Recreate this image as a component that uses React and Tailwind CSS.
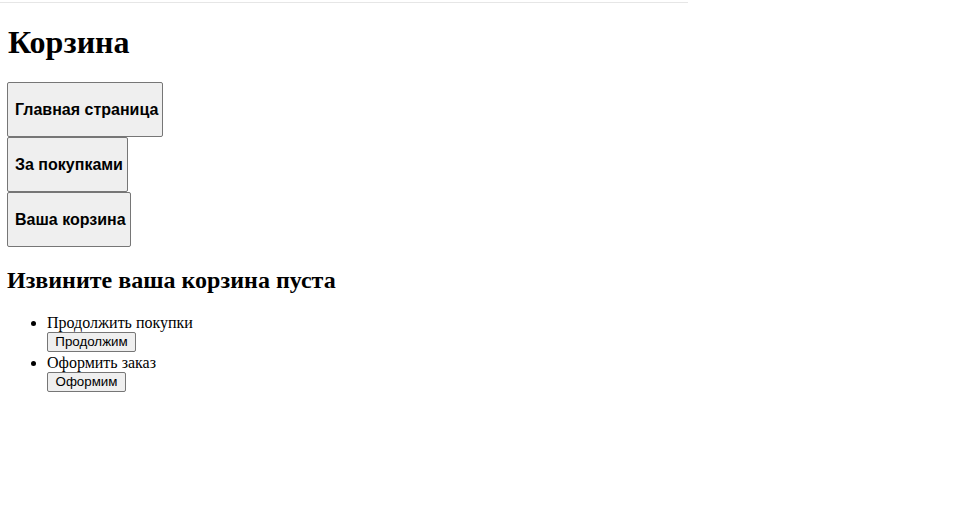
import React from 'react';

const NavButton = ({ width, children }) => (
    <button className={`block h-[55px] px-[7px] bg-[#efefef] border border-[#767676] rounded-[2px] text-[16px] font-bold text-black whitespace-nowrap font-['Liberation_Sans',Arial,sans-serif] ${width}`}>
        {children}
    </button>
);

const SmallButton = ({ width, children }) => (
    <button className={`h-[20px] px-[6px] bg-[#efefef] border border-[#767676] rounded-[2px] text-[13.33px] leading-[16px] text-black whitespace-nowrap align-top font-['Liberation_Sans',Arial,sans-serif] ${width}`}>
        {children}
    </button>
);

const App = () => {
    return (
        <div className="min-h-[506px] bg-white text-black font-['Liberation_Serif','Times_New_Roman',serif]">
            <div className="pt-[2px]">
                <div className="w-[688px] h-px bg-[#e6e6e6]" />
            </div>
            <div className="px-[7px]">
                <h1 className="pt-[21px] pl-px text-[32px] leading-[37px] font-bold">Корзина</h1>
                <div className="mt-[21px] flex flex-col items-start">
                    <NavButton width="w-[156px]">Главная страница</NavButton>
                    <NavButton width="w-[121px]">За покупками</NavButton>
                    <NavButton width="w-[124px]">Ваша корзина</NavButton>
                </div>
                <h2 className="mt-[20px] text-[24px] leading-[27px] font-bold">Извините ваша корзина пуста</h2>
                {/* list of actions */}
                <ul className="mt-[19px] pl-[40px] list-disc text-[16px] leading-[19px]">
                    <li className="pb-px">
                        Продолжить покупки
                        <br />
                        <SmallButton width="w-[89px]">Продолжим</SmallButton>
                    </li>
                    <li>
                        Оформить заказ
                        <br />
                        <SmallButton width="w-[79px]">Оформим</SmallButton>
                    </li>
                </ul>
            </div>
        </div>
    );
};

export default App;
